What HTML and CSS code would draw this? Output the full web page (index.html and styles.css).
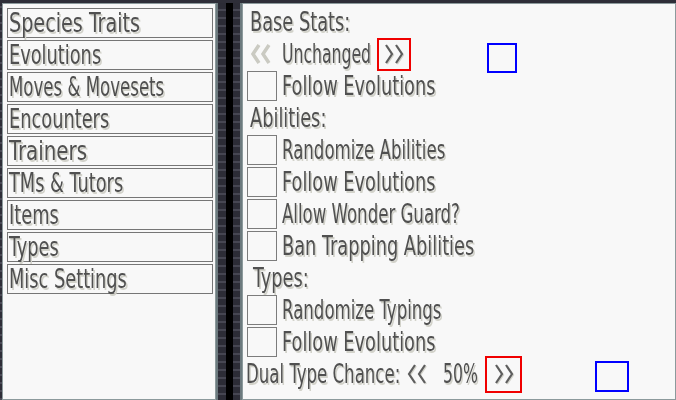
FILE: index.html
```html
<!DOCTYPE html>
<html lang="en">
<head>
<meta charset="UTF-8" />
<title>Randomizer Options</title>
<link rel="stylesheet" href="styles.css">
</head>
<body>

<nav class="menu">
  <div class="menu-item"><span class="t w">Species Traits</span></div>
  <div class="menu-item"><span class="t">Evolutions</span></div>
  <div class="menu-item"><span class="t n">Moves &amp; Movesets</span></div>
  <div class="menu-item"><span class="t">Encounters</span></div>
  <div class="menu-item"><span class="t ww">Trainers</span></div>
  <div class="menu-item"><span class="t">TMs &amp; Tutors</span></div>
  <div class="menu-item"><span class="t">Items</span></div>
  <div class="menu-item"><span class="t">Types</span></div>
  <div class="menu-item"><span class="t">Misc Settings</span></div>
</nav>

<div class="gutter"></div>

<main class="options">
  <div class="row heading"><span class="t">Base Stats:</span></div>
  <div class="row">
    <span class="arrows off">
      <svg width="20" height="20" viewBox="0 0 20 20"><polyline points="8,1 2,10 8,19" /><polyline points="18,1 12,10 18,19" /></svg>
    </span>
    <span class="value unchanged"><span class="t nn">Unchanged</span></span>
    <span class="arrows next">
      <svg width="20" height="20" viewBox="0 0 20 20"><polyline points="2,1 8,10 2,19" /><polyline points="12,1 18,10 12,19" /></svg>
    </span>
    <span class="focus"></span>
  </div>
  <label class="row check"><span class="box"></span><span class="t">Follow Evolutions</span></label>

  <div class="row heading"><span class="t">Abilities:</span></div>
  <label class="row check"><span class="box"></span><span class="t n">Randomize Abilities</span></label>
  <label class="row check"><span class="box"></span><span class="t">Follow Evolutions</span></label>
  <label class="row check"><span class="box"></span><span class="t n">Allow Wonder Guard?</span></label>
  <label class="row check"><span class="box"></span><span class="t">Ban Trapping Abilities</span></label>

  <div class="row heading types"><span class="t">Types:</span></div>
  <label class="row check"><span class="box"></span><span class="t n">Randomize Typings</span></label>
  <label class="row check"><span class="box"></span><span class="t">Follow Evolutions</span></label>
  <div class="row dual">
    <span class="label"><span class="t n">Dual Type Chance:</span></span>
    <span class="arrows prev">
      <svg width="20" height="20" viewBox="0 0 20 20"><polyline points="8,1 2,10 8,19" /><polyline points="18,1 12,10 18,19" /></svg>
    </span>
    <span class="value pct"><span class="t nn">50%</span></span>
    <span class="arrows next big">
      <svg width="20" height="20" viewBox="0 0 20 20"><polyline points="2,1 8,10 2,19" /><polyline points="12,1 18,10 12,19" /></svg>
    </span>
    <span class="focus far"></span>
  </div>
</main>

</body>
</html>
```

FILE: styles.css
```css
/* Pixel-ish window frame */
* {
  box-sizing: border-box;
}
body {
  margin: 0;
  height: 400px;
  overflow: hidden;
  display: flex;
  padding: 3px 0 0 2px;
  background: repeating-linear-gradient(to bottom, #2e2e38 0 6px, #4a4a56 6px 8px);
  font-family: "DejaVu Sans Condensed", "Liberation Sans Narrow", "DejaVu Sans", sans-serif;
  font-stretch: condensed;
  font-size: 26px;
  color: #505050;
  text-shadow: 2px 2px 0 #d2d2ca;
}
/* text is squeezed to look like the narrow pixel font */
.t {
  display: inline-block;
  transform: scaleX(0.76);
  transform-origin: 0 50%;
  white-space: nowrap;
}
.t.n { transform: scaleX(0.71); }
.t.nn { transform: scaleX(0.67); }
.t.w { transform: scaleX(0.82); }
.t.ww { transform: scaleX(0.85); }

.menu {
  width: 214px;
  background: #f8f8f8;
  border: 1px solid #8c9a9c;
  padding: 4px 2px 0 4px;
  display: flex;
  flex-direction: column;
  gap: 2px;
}
.menu-item {
  height: 30px;
  border: 1px solid #767676;
  padding-left: 1px;
  line-height: 28px;
  white-space: nowrap;
}
.gutter {
  width: 26px;
  border-left: 2px solid #6c7a7e;
  border-right: 2px solid #6c7a7e;
  background:
    linear-gradient(to right, transparent 8px, #000 8px, #000 15px, transparent 15px),
    repeating-linear-gradient(to bottom, #2c2c36 0 6px, #464652 6px 8px);
}
.options {
  flex: 1;
  background: #f8f8f8;
  border: 1px solid #8c9a9c;
  padding: 3px 0 0 4px;
  display: flex;
  flex-direction: column;
  gap: 2px;
}
.row {
  height: 30px;
  display: flex;
  align-items: center;
  white-space: nowrap;
}
.heading {
  padding-left: 3px;
}
.heading.types {
  padding-left: 6px;
}
.check .box {
  width: 30px;
  height: 30px;
  border: 1px solid #7c7c7c;
  margin-right: 5px;
  flex: none;
}
.value, .label {
  flex: none;
}
.arrows {
  flex: none;
}
.arrows svg {
  display: block;
  filter: drop-shadow(1px 1px 0 #d2d2ca);
}
.arrows polyline {
  fill: none;
  stroke: #5e5e5e;
  stroke-width: 2.2;
}
.arrows.off {
  margin-left: 4px;
  margin-right: 11px;
}
.arrows.off svg {
  filter: none;
}
.arrows.off polyline {
  stroke: #cacac2;
  stroke-width: 3.5;
}
.value.unchanged {
  width: 95px;
}
.arrows.next {
  width: 34px;
  height: 33px;
  border: 2px solid #f00000;
  display: flex;
  align-items: center;
  justify-content: center;
}
.arrows.next.big {
  width: 37px;
  height: 37px;
}
.dual .label {
  width: 161px;
  margin-left: -1px;
}
.arrows.prev {
  margin-right: 16px;
}
.value.pct {
  width: 42px;
}
.focus {
  flex: none;
  width: 30px;
  height: 30px;
  border: 2px solid #0000ff;
  margin-left: 76px;
  align-self: flex-end;
  margin-bottom: -4px;
}
.focus.far {
  width: 34px;
  height: 31px;
  margin-left: 73px;
  margin-bottom: -3px;
}
```
